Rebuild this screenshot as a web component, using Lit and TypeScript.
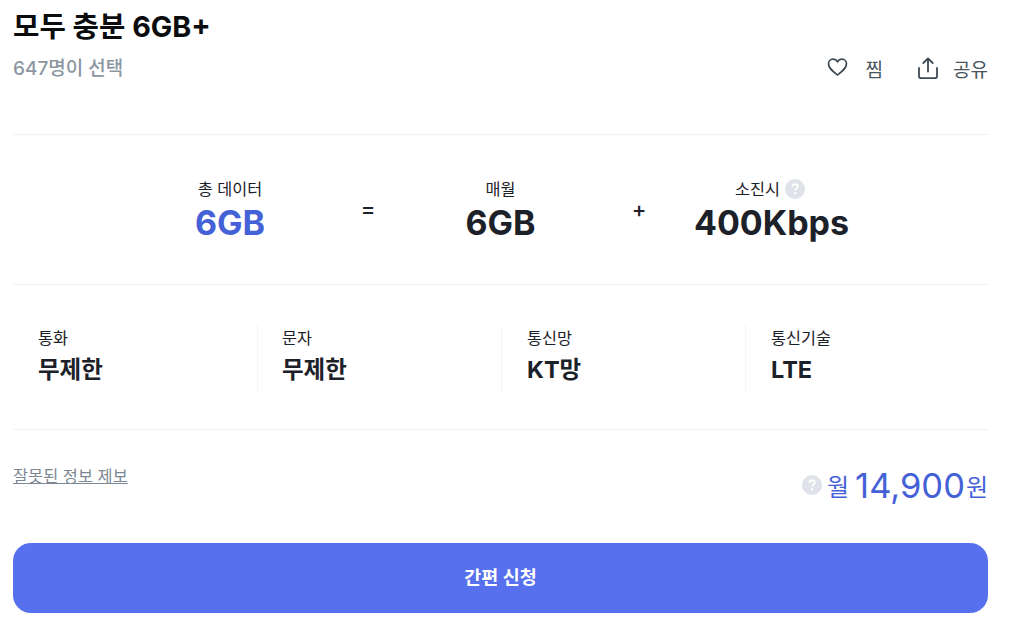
import { LitElement, html, css } from "lit";
import { customElement } from "lit/decorators.js";

const help = html`<svg class="help" viewBox="0 0 20 20"><circle cx="10" cy="10" r="10" fill="#dfe2e8"/><path d="M7.4 7.8c0-1.5 1.100-2.500 2.700-2.500s2.600 1 2.600 2.200c0 1-.5 1.500-1.300 2.100-.8.5-1.100.9-1.100 1.700" fill="none" stroke="#fff" stroke-width="1.900"/><circle cx="10.200" cy="14.300" r="1.200" fill="#fff"/></svg>`;

@customElement("app-root")
export class AppRoot extends LitElement {
  static styles = css`
    :host { display: block; width: 1016px; height: 629px; overflow: hidden; background: #fff; font-family: Inter, "Noto Sans CJK KR", sans-serif; color: #1c2129; }
    .page { display: flex; flex-direction: column; padding: 0 28px 0 13px; }
    .top { height: 134px; border-bottom: 1px solid #f0f1f3; display: flex; justify-content: space-between; }
    h1 { margin: 9px 0 0; font-size: 28.700px; line-height: 36px; font-weight: 700; color: #0b0c0e; }
    .count { margin-top: 10px; font-size: 19px; line-height: 28px; font-weight: 500; color: #8b96a1; }
    .actions { display: flex; align-items: center; height: 28px; margin-top: 54px; font-size: 19px; color: #4a5560; }
    .actions svg { display: block; }
    .heart { margin: -2px 18px 0 1px; }
    .jjim { margin-right: 34px; }
    .share { margin-right: 14px; }
    .formula { height: 150px; border-bottom: 1px solid #f0f1f3; display: grid; grid-template-columns: 150px 126px 139px 121.5px 160px; padding: 42px 0 0 142px; box-sizing: border-box; }
    .cell { text-align: center; }
    .label { font-size: 16.300px; line-height: 24px; color: #1c2129; display: flex; align-items: center; justify-content: center; gap: 5px; }
    .label.offset { padding-right: 3px; }
    .big { font-size: 34px; line-height: 44px; font-weight: 700; white-space: nowrap; }
    .blue { color: #4561d8; }
    .op { font-size: 22px; font-weight: 500; text-align: center; line-height: 24px; padding-top: 20px; }
    .op.second { padding-left: 16.500px; }
    .help { width: 20px; height: 20px; display: block; }
    .specs { height: 145px; border-bottom: 1px solid #f0f1f3; display: grid; grid-template-columns: repeat(4, 244px); box-sizing: border-box; padding-top: 40px; }
    .spec { height: 66px; border-left: 1px solid #f3f4f6; padding-left: 24px; box-sizing: border-box; }
    .spec:first-child { border-left-color: transparent; }
    .spec:nth-child(n + 3) { padding-left: 25px; }
    .spec .t { font-size: 16.300px; line-height: 26px; }
    .spec .v { font-size: 23.500px; line-height: 34px; font-weight: 700; margin-top: 2px; }
    .price { height: 113px; display: flex; justify-content: space-between; box-sizing: border-box; }
    .report { margin-top: 33px; font-size: 16.400px; line-height: 26px; height: 26px; color: #7b8894; text-decoration: underline; }
    .amount { display: flex; align-items: center; height: 44px; margin-top: 33px; color: #4561d8; font-size: 24px; }
    .amount .help { margin-right: 5px; }
    .amount b { font-weight: 400; font-size: 34.500px; margin: 0 1px 0 6px; }
    button { border: 0; width: 975px; height: 70px; border-radius: 18px; background: #5670ee; color: #fff; font: 700 18.500px Inter, "Noto Sans CJK KR", sans-serif; display: block; padding: 0 0 4px; }
  `;

  render() {
    return html`<div class="page">
      <section class="top">
        <div>
          <h1>모두 충분 6GB+</h1>
          <div class="count">647명이 선택</div>
        </div>
        <div class="actions">
          <svg class="heart" width="21" height="20" viewBox="0 0 21 20"><path d="M10.500 18C5.800 14.300 1.500 11.200 1.500 6.800 1.500 4.200 3.500 2.200 6 2.200c1.900 0 3.500 1 4.500 2.700 1-1.700 2.600-2.700 4.500-2.700 2.500 0 4.500 2 4.500 4.600 0 4.400-4.300 7.500-9 11.200z" fill="none" stroke="#3f4a55" stroke-width="1.700" stroke-linejoin="round"/></svg>
          <span class="jjim">찜</span>
          <svg class="share" width="22" height="24" viewBox="0 0 22 24"><path d="M11 15.500V2.500M6.300 7 11 2.300 15.700 7M2 12v8.200c0 1.200.8 1.900 2 1.900h14c1.200 0 2-.7 2-1.900V12" fill="none" stroke="#3f4a55" stroke-width="1.800" stroke-linecap="round" stroke-linejoin="round"/></svg>
          <span>공유</span>
        </div>
      </section>
      <section class="formula">
        <div class="cell"><div class="label">총 데이터</div><div class="big blue">6GB</div></div>
        <div class="op">=</div>
        <div class="cell"><div class="label">매월</div><div class="big">6GB</div></div>
        <div class="op second">+</div>
        <div class="cell"><div class="label offset">소진시 ${help}</div><div class="big">400Kbps</div></div>
      </section>
      <section class="specs">
        <div class="spec"><div class="t">통화</div><div class="v">무제한</div></div>
        <div class="spec"><div class="t">문자</div><div class="v">무제한</div></div>
        <div class="spec"><div class="t">통신망</div><div class="v">KT망</div></div>
        <div class="spec"><div class="t">통신기술</div><div class="v">LTE</div></div>
      </section>
      <section class="price">
        <div class="report">잘못된 정보 제보</div>
        <div class="amount">${help}<span>월</span><b>14,900</b><span>원</span></div>
      </section>
      <button>간편 신청</button>
    </div>`;
  }
}
